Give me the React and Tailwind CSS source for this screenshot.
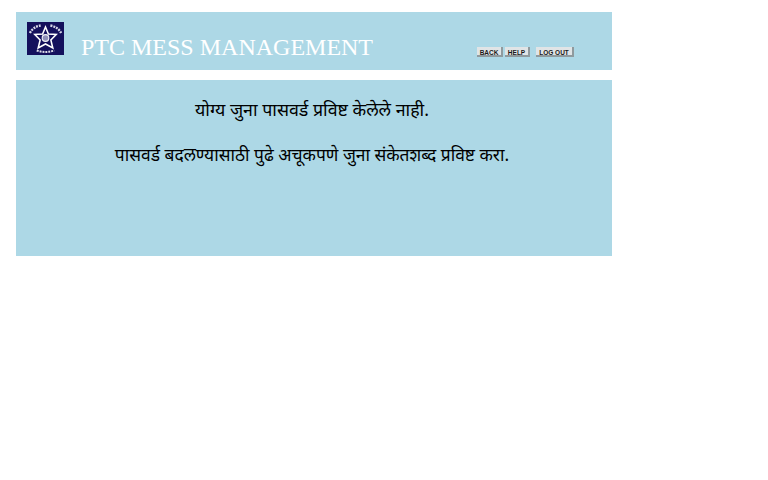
import { useState } from 'react';

function Logo() {
  return (
    <svg width="37" height="33" viewBox="0 0 38 33" preserveAspectRatio="none" className="shrink-0">
      <rect width="38" height="33" fill="#14105c" />
      <path d="M3 11 Q6 5 14 3.5" stroke="#d8d8e8" strokeWidth="2.4" fill="none" strokeDasharray="2 1" />
      <path d="M24 3.5 Q32 5 35 11" stroke="#d8d8e8" strokeWidth="2.4" fill="none" strokeDasharray="2 1" />
      <path d="M19 5 L22 12 L30 12.5 L24.5 18 L26.5 26 L19 22 L11.5 26 L13.5 18 L8 12.5 L16 12 Z" fill="#14105c" stroke="#fff" strokeWidth="1.6" />
      <circle cx="19" cy="16" r="3.4" fill="#8f8fb8" stroke="#f0f0f5" strokeWidth="1.2" />
      <path d="M10 28.5 Q19 31.5 28 28.5" stroke="#e0e0ea" strokeWidth="2" fill="none" strokeDasharray="2 1" />
    </svg>
  );
}

function NavButton({ label, className }) {
  return (
    <button
      type="button"
      className={`h-[10px] pt-px bg-[#e0e4e6] border-b-2 border-r-2 border-[#8f9a9e] font-['Liberation_Sans',sans-serif] text-[6.5px] leading-[9px] font-bold text-[#1a1a1a] ${className}`}
    >
      {label}
    </button>
  );
}

export default function App() {
  const [lang] = useState('mr');

  return (
    <div lang={lang} className="w-[596px] ml-4 pt-3 flex flex-col gap-[10px]">
      <div className="h-[58px] bg-[#add8e6] pl-[11px] pt-[10px] flex items-start">
        <Logo />
        <h1 className="ml-[17px] mt-[11px] font-['Liberation_Serif',serif] text-[24px] leading-[28px] text-white whitespace-nowrap">
          PTC MESS MANAGEMENT
        </h1>
        <div className="ml-[104px] mt-[25px] flex items-start">
          <NavButton label="BACK" className="w-[26px]" />
          <NavButton label="HELP" className="w-[25px] ml-[2px]" />
          <NavButton label="LOG OUT" className="w-[38px] ml-[6px]" />
        </div>
      </div>
      <div className="h-[176px] bg-[#add8e6] pt-[17px] pr-1 text-center font-['Noto_Sans',sans-serif] leading-[24px] text-black">
        <p className="text-[17.8px]">योग्य जुना पासवर्ड प्रविष्ट केलेले नाही.</p>
        <p className="mt-[21px] text-[17.4px]">पासवर्ड बदलण्यासाठी पुढे अचूकपणे जुना संकेतशब्द प्रविष्ट करा.</p>
      </div>
    </div>
  );
}
